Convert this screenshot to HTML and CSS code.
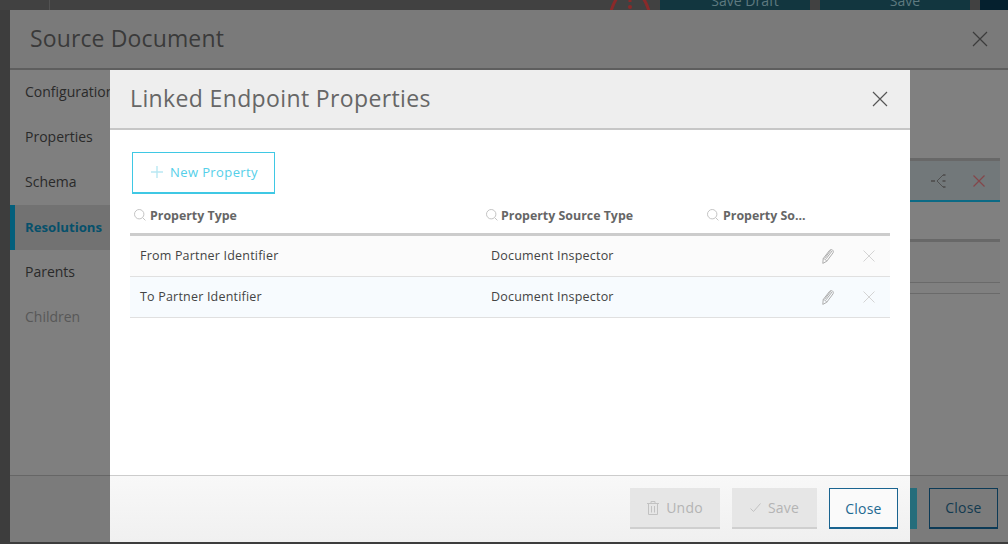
FILE: index.html
```html
<!DOCTYPE html>
<html lang="en">
<head>
    <meta charset="UTF-8">
    <meta name="viewport" content="width=device-width, initial-scale=1.0">
    <title>Linked Endpoint Properties</title>
    <link rel="stylesheet" href="styles.css">
</head>
<body>
    <div class="toolbar">
        <div class="toolbar-rule"></div>
        <svg class="alert-icon" width="40" height="10" viewBox="0 0 40 10">
            <path d="M1 11 C4 1 10 -9 20 -9 C30 -9 36 1 39 11"/>
            <circle cx="20" cy="7" r="2"/>
            <rect x="18.5" y="-6" width="3" height="8"/>
        </svg>
        <div class="toolbar-btn">Save Draft</div>
        <div class="toolbar-btn">Save</div>
        <div class="toolbar-end"></div>
    </div>

    <div class="modal source-modal">
        <div class="modal-header source-header">
            <h1>Source Document</h1>
            <svg class="icon-x" width="16" height="16" viewBox="0 0 16 16"><path d="M1 1 L15 15 M15 1 L1 15"/></svg>
        </div>
        <div class="source-body">
            <ul class="side-nav">
                <li>Configuration</li>
                <li>Properties</li>
                <li>Schema</li>
                <li class="active">Resolutions</li>
                <li>Parents</li>
                <li class="muted">Children</li>
            </ul>
            <div class="source-main">
                <div class="band">
                    <svg class="branch-icon" width="16" height="16" viewBox="0 0 16 16">
                        <path class="branch-line" d="M13 2 L7 8 L13 14"/>
                        <path class="branch-dots" d="M1 8 H5 M13 2 H15.5 M12.5 8 H15.5 M13 14 H15.5"/>
                    </svg>
                    <svg class="red-x" width="12" height="12" viewBox="0 0 12 12"><path d="M.5 .5 L11.5 11.5 M11.5 .5 L.5 11.5"/></svg>
                </div>
                <div class="band-lower"></div>
                <div class="band-row"></div>
            </div>
        </div>
        <div class="source-footer">
            <div class="btn-teal"></div>
            <div class="btn-dim-close">Close</div>
        </div>
    </div>

    <div class="modal linked-modal">
        <div class="modal-header linked-header">
            <h2>Linked Endpoint Properties</h2>
            <svg class="icon-x" width="16" height="16" viewBox="0 0 16 16"><path d="M1 1 L15 15 M15 1 L1 15"/></svg>
        </div>
        <div class="linked-body">
            <button class="btn-new">
                <svg width="12" height="12" viewBox="0 0 12 12"><path d="M6 0 V12 M0 6 H12"/></svg>
                New Property
            </button>
            <div class="prop-table">
                <div class="prop-row prop-head">
                    <div class="col-head">
                        <svg class="search-icon" width="12" height="12" viewBox="0 0 12 12"><circle cx="5.2" cy="5.2" r="4.7"/><path d="M8.6 8.6 L11.4 11.4"/></svg>
                        Property Type
                    </div>
                    <div class="col-head">
                        <svg class="search-icon" width="12" height="12" viewBox="0 0 12 12"><circle cx="5.2" cy="5.2" r="4.7"/><path d="M8.6 8.6 L11.4 11.4"/></svg>
                        Property Source Type
                    </div>
                    <div class="col-head">
                        <svg class="search-icon" width="12" height="12" viewBox="0 0 12 12"><circle cx="5.2" cy="5.2" r="4.7"/><path d="M8.6 8.6 L11.4 11.4"/></svg>
                        Property So...
                    </div>
                </div>
                <div class="prop-row prop-item">
                    <div class="cell">From Partner Identifier</div>
                    <div class="cell">Document Inspector</div>
                    <div class="cell"></div>
                    <div class="cell-icon">
                        <svg class="pencil" width="12" height="15" viewBox="0 0 12 15"><path d="M.8 14.4 L1.2 9.6 L7.6 1.3 C8.4 .4 9.7 .4 10.6 1.1 C11.5 1.8 11.6 3 11 3.9 L4.7 12.3 Z M1.2 9.6 C2.4 9.6 4.2 10.8 4.7 12.3 M3 8.9 L8.8 1.2 M4.1 9.8 L10 2"/></svg>
                    </div>
                    <div class="cell-icon">
                        <svg class="row-x" width="12" height="12" viewBox="0 0 12 12"><path d="M.5 .5 L11.5 11.5 M11.5 .5 L.5 11.5"/></svg>
                    </div>
                </div>
                <div class="prop-row prop-item alt">
                    <div class="cell">To Partner Identifier</div>
                    <div class="cell">Document Inspector</div>
                    <div class="cell"></div>
                    <div class="cell-icon">
                        <svg class="pencil" width="12" height="15" viewBox="0 0 12 15"><path d="M.8 14.4 L1.2 9.6 L7.6 1.3 C8.4 .4 9.7 .4 10.6 1.1 C11.5 1.8 11.6 3 11 3.9 L4.7 12.3 Z M1.2 9.6 C2.4 9.6 4.2 10.8 4.7 12.3 M3 8.9 L8.8 1.2 M4.1 9.8 L10 2"/></svg>
                    </div>
                    <div class="cell-icon">
                        <svg class="row-x" width="12" height="12" viewBox="0 0 12 12"><path d="M.5 .5 L11.5 11.5 M11.5 .5 L.5 11.5"/></svg>
                    </div>
                </div>
            </div>
        </div>
        <div class="linked-footer">
            <button class="btn-disabled">
                <svg width="12" height="14" viewBox="0 0 12 14"><path d="M0 2.5 H12 M4 2.5 V.5 H8 V2.5 M1.5 2.5 V13.5 H10.5 V2.5 M4.5 5 V11.5 M7.5 5 V11.5"/></svg>
                Undo
            </button>
            <button class="btn-disabled">
                <svg width="11" height="9" viewBox="0 0 11 9"><path d="M.5 5.5 L3.5 8.5 L10.5 .5"/></svg>
                Save
            </button>
            <button class="btn-close">Close</button>
        </div>
    </div>
</body>
</html>
```

FILE: styles.css
```css
html, body {
    height: 100%;
}
body {
    margin: 0;
    overflow: hidden;
    font-family: "Open Sans", "Noto Sans", sans-serif;
    background-color: #3d3d3d;
}
h1, h2 {
    margin: 0 0 2px;
    font-weight: 400;
    font-size: 23px;
}
h1 {
    letter-spacing: 0.13px;
}
h2 {
    letter-spacing: 0.37px;
}
svg {
    fill: none;
    display: block;
}

/* dimmed page behind the dialogs */
.toolbar {
    display: flex;
    height: 10px;
    overflow: hidden;
    background-color: #414141;
}
.toolbar-rule {
    width: 1px;
    margin-left: 49px;
    margin-right: 560px;
    background-color: #525252;
}
.alert-icon {
    margin-right: 10px;
}
.alert-icon path {
    stroke: #8a2a2a;
    stroke-width: 3;
}
.alert-icon circle, .alert-icon rect {
    fill: #8a2a2a;
}
.toolbar-btn {
    box-sizing: border-box;
    width: 150px;
    height: 10px;
    margin-right: 10px;
    padding-left: 20px;
    background-color: #12363f;
    color: #5e7a80;
    font-size: 14px;
    line-height: 1px;
    text-align: center;
}
.toolbar-end {
    flex: 1;
    background-color: #05202e;
}

.modal {
    position: absolute;
    display: flex;
    flex-direction: column;
}
.modal-header {
    display: flex;
    align-items: center;
    justify-content: space-between;
    height: 58px;
}
.source-modal {
    left: 10px;
    top: 10px;
    width: 998px;
    height: 532px;
    background-color: #808080;
}
.source-header {
    padding: 0 20px;
    background-color: #7a7a7a;
    border-bottom: 2px solid #5e5e5e;
    color: #3a3a3a;
}
.source-header .icon-x path {
    stroke: #3c3c3c;
}
.icon-x path {
    stroke-width: 1.2;
}
.source-body {
    flex: 1;
    display: flex;
}
.side-nav {
    width: 100px;
    margin: 0;
    padding: 0;
    list-style: none;
    background-color: #7f7f7f;
    font-size: 14px;
    color: #2a2a2a;
}
.side-nav li {
    height: 45px;
    line-height: 43px;
    padding-left: 15px;
    white-space: nowrap;
}
.side-nav .active {
    padding-left: 10px;
    border-left: 5px solid #035f7c;
    background-color: #727272;
    color: #06506b;
    font-size: 13.2px;
    line-height: 45px;
    font-weight: 700;
}
.side-nav .muted {
    color: #585858;
}
.source-main {
    flex: 1;
    padding: 88px 8px 0 0;
}
.band {
    display: flex;
    align-items: center;
    justify-content: flex-end;
    gap: 27px;
    height: 39px;
    padding-right: 15px;
    background-color: #72787a;
    border-top: 3px solid #686868;
    border-bottom: 2px solid #0b6a85;
}
.branch-line {
    stroke: #4f4f4f;
}
.branch-dots {
    stroke: #555;
    stroke-width: 2;
}
.red-x path {
    stroke: #84464a;
    stroke-width: 1.2;
}
.band-lower {
    height: 40px;
    margin-top: 37px;
    background-color: #7e7e7e;
    border-top: 3px solid #686868;
    border-bottom: 1px solid #6a6a6a;
}
.band-row {
    height: 10px;
    border-bottom: 1px solid #6a6a6a;
}
.source-footer {
    display: flex;
    justify-content: flex-end;
    align-items: flex-start;
    gap: 12px;
    height: 54px;
    padding: 12px 10px 0 0;
    background-color: #7b7b7b;
    border-top: 1px solid #666;
}
.btn-teal {
    width: 120px;
    height: 41px;
    background-color: #256d7b;
}
.btn-dim-close {
    box-sizing: border-box;
    width: 69px;
    height: 41px;
    border: 1px solid #0c3a56;
    border-bottom-width: 2px;
    color: #123a50;
    font-size: 14px;
    line-height: 38px;
    text-align: center;
    letter-spacing: 0.2px;
}

/* top dialog */
.linked-modal {
    left: 110px;
    top: 70px;
    width: 800px;
    height: 472px;
    background-color: #fff;
}
.linked-header {
    padding: 0 22px 0 20px;
    background-color: #eee;
    border-bottom: 2px solid #c6c6c6;
    color: #666;
}
.linked-header .icon-x path {
    stroke: #555;
}
.linked-body {
    flex: 1;
    padding: 22px 20px 0;
}
button {
    font-family: inherit;
    font-size: 14px;
    letter-spacing: 0.2px;
    background: none;
    cursor: pointer;
}
.btn-new {
    display: flex;
    align-items: center;
    gap: 7px;
    box-sizing: border-box;
    width: 143px;
    height: 42px;
    margin-left: 2px;
    padding: 0 0 2px 18px;
    border: 1px solid #3fc8e4;
    border-bottom-width: 2px;
    color: #55cfe9;
    font-size: 13px;
    letter-spacing: 0.4px;
}
.btn-new path {
    stroke: #b9e8f3;
    stroke-width: 1.4;
}
.prop-table {
    margin-top: 9px;
}
.prop-row {
    display: grid;
    grid-template-columns: 351px 221px 106px 41px 41px;
    align-items: center;
}
.prop-head {
    box-sizing: content-box;
    height: 24px;
    padding-bottom: 6px;
    border-bottom: 3px solid #ccc;
}
.col-head {
    display: flex;
    align-items: center;
    gap: 4px;
    padding-left: 4px;
    font-size: 12.4px;
    font-weight: 700;
    color: #666;
    white-space: nowrap;
}
.col-head:nth-child(2) {
    gap: 3px;
    padding-left: 5px;
}
.col-head:nth-child(3) {
    padding-left: 5px;
}
.search-icon circle, .search-icon path {
    stroke: #c4c4c4;
}
.prop-item {
    height: 40px;
    background-color: #fbfbfb;
    border-bottom: 1px solid #e0e0e0;
    font-size: 12.5px;
    letter-spacing: 0.2px;
    color: #444;
}
.prop-item.alt {
    background-color: #f7fbfe;
}
.cell {
    padding-left: 10px;
    padding-bottom: 1px;
}
.cell-icon {
    display: flex;
    justify-content: center;
    padding-right: 1px;
}
.pencil path {
    stroke: #adadad;
}
.row-x path {
    stroke: #d4d4d4;
}
.linked-footer {
    display: flex;
    justify-content: flex-end;
    align-items: flex-start;
    gap: 12px;
    height: 54px;
    padding: 12px 12px 0 0;
    background: linear-gradient(#f8f8f8, #f0f0f0);
    border-top: 1px solid #ccc;
}
.btn-disabled {
    display: flex;
    align-items: center;
    justify-content: center;
    gap: 7px;
    height: 41px;
    width: 90px;
    padding: 0;
    background-color: #e6e6e6;
    border: 0;
    border-bottom: 2px solid #cfcfcf;
    color: #b4b4b4;
}
.btn-disabled + .btn-disabled {
    width: 85px;
}
.btn-disabled path {
    stroke: #c2c2c2;
}
.btn-close {
    box-sizing: border-box;
    width: 69px;
    height: 41px;
    padding: 0;
    border: 1px solid #1a6490;
    border-bottom-width: 2px;
    background-color: #fafafa;
    color: #1f6a92;
}
```
